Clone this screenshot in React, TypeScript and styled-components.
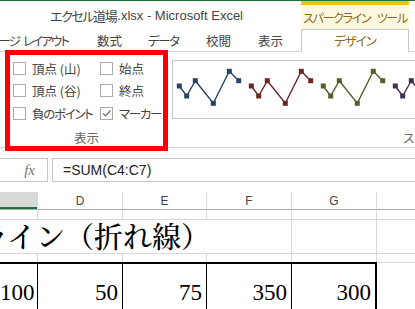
import React from "react";
import styled, { createGlobalStyle } from "styled-components";

const GlobalStyle = createGlobalStyle`
  html, body { margin: 0; padding: 0; background: #fff; }
  body { width: 415px; height: 309px; overflow: hidden; }
`;

const UI_FONT = `"Noto Sans CJK JP", "Liberation Sans", sans-serif`;
const COLS = "38px 85px 84px 85px 85px 85px";

const Window = styled.div`
  width: 415px;
  height: 309px;
  overflow: hidden;
  display: flex;
  flex-direction: column;
  background: #fff;
  border-top: 1px solid #217346;
  box-sizing: border-box;
  font-family: ${UI_FONT};
  font-feature-settings: "palt" 1;
  color: #444;
`;

const TopBar = styled.div`
  display: flex;
  height: 51px;
  flex-shrink: 0;
`;

const TopLeft = styled.div`
  flex: 1;
  display: flex;
  flex-direction: column;
  min-width: 0;
`;

const TitleRow = styled.div`
  height: 28px;
  display: flex;
  align-items: center;
  padding-left: 50px;
  font-family: "Liberation Sans", "Noto Sans CJK JP", sans-serif;
  font-size: 13px;
  color: #444;
  white-space: pre;
`;

const TitleJa = styled.span`
  letter-spacing: -1.4px;
  margin-right: 1px;
`;

const TabRow = styled.div`
  height: 23px;
  box-sizing: border-box;
  border-bottom: 1px solid #d5d5d5;
  display: flex;
`;

const Tab = styled.div<{ $w: number; $end?: boolean; $pr?: number; $ls?: number }>`
  width: ${(p) => p.$w}px;
  flex-shrink: 0;
  overflow: hidden;
  display: flex;
  justify-content: ${(p) => (p.$end ? "flex-end" : "flex-start")};
  padding-right: ${(p) => p.$pr ?? 0}px;
  box-sizing: border-box;
  padding-top: 3px;
  font-size: 12.5px;
  line-height: 17px;
  letter-spacing: ${(p) => p.$ls ?? 0}px;
  word-spacing: 3px;
  white-space: nowrap;
  color: #444;
  & > span { flex-shrink: 0; }
`;

const ToolColumn = styled.div`
  width: 108px;
  display: flex;
  flex-direction: column;
  flex-shrink: 0;
`;

const ToolHeader = styled.div`
  height: 28px;
  box-sizing: border-box;
  border-top: 4px solid #f0c400;
  background: #fff8e1;
  display: flex;
  align-items: center;
  justify-content: center;
  font-size: 12px;
  letter-spacing: -1.3px;
  word-spacing: 5px;
  color: #8b6b12;
  white-space: nowrap;
`;

const DesignTab = styled.div`
  height: 23px;
  box-sizing: border-box;
  border: 1px solid #c9c9c9;
  border-bottom: none;
  background: #fff;
  display: flex;
  justify-content: center;
  padding-top: 2px;
  font-size: 12.5px;
  line-height: 17px;
  letter-spacing: -1px;
  color: #8b6b12;
`;

const RightEdge = styled.div`
  width: 6px;
  flex-shrink: 0;
  border-bottom: 1px solid #d5d5d5;
`;

const Ribbon = styled.div`
  height: 95px;
  flex-shrink: 0;
  border-bottom: 1px solid #d5d5d5;
  display: flex;
  padding-left: 5px;
`;

const DisplayGroup = styled.div`
  position: relative;
  width: 163px;
  flex-shrink: 0;
  box-sizing: border-box;
  padding: 5px 8px 1px 8px;
  display: flex;
  flex-direction: column;
`;

const RedFrame = styled.div`
  position: absolute;
  top: -2px;
  left: 0;
  right: 0;
  bottom: -4px;
  border: 5px solid #ff0000;
  pointer-events: none;
`;

const CheckGrid = styled.div`
  display: grid;
  grid-template-columns: 87px auto;
  grid-auto-rows: 22.5px;
`;

const CheckItem = styled.label<{ $ls?: number }>`
  display: flex;
  align-items: center;
  gap: 6px;
  font-size: 12.5px;
  letter-spacing: ${(p) => p.$ls ?? 0}px;
  color: #444;
  white-space: nowrap;
`;

const Box = styled.span`
  width: 13px;
  height: 13px;
  box-sizing: border-box;
  border: 1px solid #ababab;
  background: #fff;
  display: grid;
  place-items: center;
  flex-shrink: 0;
`;

const GroupLabel = styled.div<{ $pl?: number }>`
  margin-top: auto;
  font-size: 12.5px;
  line-height: 16px;
  color: #666;
  white-space: nowrap;
  text-align: ${(p) => (p.$pl !== undefined ? "left" : "center")};
  padding-left: ${(p) => p.$pl ?? 0}px;
`;

const GalleryGroup = styled.div`
  flex: 1;
  margin-left: 4px;
  padding-top: 8px;
  padding-bottom: 1px;
  display: flex;
  flex-direction: column;
  min-width: 0;
`;

const GalleryBox = styled.div`
  height: 59px;
  box-sizing: border-box;
  border: 1px solid #c6c6c6;
  border-right: none;
  overflow: hidden;
`;

const FormulaBar = styled.div`
  display: flex;
  gap: 4px;
  height: 24px;
  margin: 10px -2px 10px -1px;
  flex-shrink: 0;
`;

const FxBox = styled.div`
  width: 49px;
  box-sizing: border-box;
  border: 1px solid #c6c6c6;
  display: flex;
  align-items: center;
  justify-content: flex-end;
  padding-right: 12px;
  font-family: "Liberation Serif", serif;
  font-style: italic;
  font-size: 15px;
  color: #777;
`;

const FormulaInput = styled.div`
  flex: 1;
  box-sizing: border-box;
  border: 1px solid #c6c6c6;
  display: flex;
  align-items: center;
  padding-left: 10px;
  font-family: "Liberation Sans", sans-serif;
  font-size: 14px;
  color: #222;
`;

const Sheet = styled.div`
  flex: 1;
  overflow: hidden;
  width: 462px;
`;

const GridRow = styled.div<{ $h: number }>`
  display: grid;
  grid-template-columns: ${COLS};
  height: ${(p) => p.$h}px;
`;

const HeaderCell = styled.div<{ $selected?: boolean }>`
  box-sizing: border-box;
  border-right: 1px solid #dadada;
  border-bottom: 1px solid #ababab;
  background: ${(p) => (p.$selected ? "#d9d9d9" : "#fff")};
  box-shadow: ${(p) => (p.$selected ? "inset 0 -2px 0 #217346" : "none")};
  display: flex;
  align-items: center;
  justify-content: center;
  font-family: "Liberation Sans", sans-serif;
  font-size: 12px;
  color: #444;
`;

const Cell = styled.div<{ $noBottom?: boolean }>`
  box-sizing: border-box;
  border-right: 1px solid #d8d8d8;
  border-bottom: ${(p) => (p.$noBottom ? "none" : "1px solid #d8d8d8")};
`;

const TitleCell = styled.div`
  grid-column: 1 / span 4;
  box-sizing: border-box;
  border-right: 1px solid #d8d8d8;
  border-bottom: 1px solid #d8d8d8;
  overflow: hidden;
  display: flex;
  justify-content: flex-end;
  align-items: flex-end;
  padding: 0 81px 1px 0;
`;

const TitleText = styled.span`
  flex-shrink: 0;
  white-space: nowrap;
  font-family: "Noto Serif CJK JP", "Noto Sans CJK JP", serif;
  font-size: 29px;
  font-weight: 500;
  line-height: 32px;
  color: #000;
  font-feature-settings: normal;
`;

const DataCell = styled.div<{ $thickRight?: boolean }>`
  box-sizing: border-box;
  border-top: 2px solid #000;
  border-right: ${(p) => (p.$thickRight ? "2px" : "1px")} solid #000;
  text-align: right;
  padding: 15px 4px 0 0;
  font-family: "Liberation Serif", serif;
  font-size: 23px;
  line-height: 28px;
  color: #000;
`;

const EmptyDataCell = styled.div`
  box-sizing: border-box;
  border-top: 1px solid #d8d8d8;
`;

const SERIES = ["#27436a", "#6e2624", "#4f6228", "#403152"];
const XS = [6.3, 13.7, 22.3, 40.3, 56.3, 65.7];
const YS = [25, 35, 19.7, 42.3, 10.3, 19.7];

const Sparklines: React.FC = () => (
  <svg width="260" height="57" viewBox="0 0 260 57">
    {SERIES.map((c, i) => {
      const pts = XS.map((x, k) => [x + i * 72, YS[k]] as const);
      return (
        <g key={c}>
          <polyline
            points={pts.map(([x, y]) => `${x},${y}`).join(" ")}
            fill="none"
            stroke={c}
            strokeWidth={1.4}
          />
          {pts.map(([x, y], k) => (
            <rect key={k} x={x - 2.5} y={y - 2.5} width={5} height={5} fill={c} />
          ))}
        </g>
      );
    })}
  </svg>
);

const Check: React.FC<{ label: string; checked?: boolean; ls?: number }> = ({
  label,
  checked,
  ls,
}) => (
  <CheckItem $ls={ls}>
    <Box>
      {checked && (
        <svg width="11" height="11" viewBox="0 0 11 11">
          <polyline points="2,5.5 4.5,8 9.5,2.5" fill="none" stroke="#707070" strokeWidth="1.2" />
        </svg>
      )}
    </Box>
    <span>{label}</span>
  </CheckItem>
);

export default function App() {
  return (
    <>
      <GlobalStyle />
      <Window>
        <TopBar>
          <TopLeft>
            <TitleRow>
              <TitleJa>エクセル道場</TitleJa>.xlsx - Microsoft Excel
            </TitleRow>
            <TabRow>
              <Tab $w={97} $end $pr={29} $ls={-1.9}>
                <span>ページ レイアウト</span>
              </Tab>
              <Tab $w={51}>数式</Tab>
              <Tab $w={58} $ls={-1.5}>データ</Tab>
              <Tab $w={52}>校閲</Tab>
              <Tab $w={43}>表示</Tab>
            </TabRow>
          </TopLeft>
          <ToolColumn>
            <ToolHeader>スパークライン ツール</ToolHeader>
            <DesignTab>デザイン</DesignTab>
          </ToolColumn>
          <RightEdge />
        </TopBar>

        <Ribbon>
          <DisplayGroup>
            <CheckGrid>
              <Check label="頂点 (山)" />
              <Check label="始点" />
              <Check label="頂点 (谷)" />
              <Check label="終点" />
              <Check label="負のポイント" ls={-1.3} />
              <Check label="マーカー" checked ls={-1.3} />
            </CheckGrid>
            <GroupLabel>表示</GroupLabel>
            <RedFrame />
          </DisplayGroup>
          <GalleryGroup>
            <GalleryBox>
              <Sparklines />
            </GalleryBox>
            <GroupLabel $pl={231}>スタイル</GroupLabel>
          </GalleryGroup>
        </Ribbon>

        <FormulaBar>
          <FxBox>fx</FxBox>
          <FormulaInput>=SUM(C4:C7)</FormulaInput>
        </FormulaBar>

        <Sheet>
          <GridRow $h={18}>
            <HeaderCell $selected />
            <HeaderCell>D</HeaderCell>
            <HeaderCell>E</HeaderCell>
            <HeaderCell>F</HeaderCell>
            <HeaderCell>G</HeaderCell>
            <HeaderCell>H</HeaderCell>
          </GridRow>
          <GridRow $h={10}>
            <Cell />
            <Cell />
            <Cell />
            <Cell />
            <Cell />
            <Cell />
          </GridRow>
          <GridRow $h={34}>
            <TitleCell>
              <TitleText>スパークライン（折れ線）</TitleText>
            </TitleCell>
            <Cell />
            <Cell />
          </GridRow>
          <GridRow $h={8}>
            <Cell $noBottom />
            <Cell $noBottom />
            <Cell $noBottom />
            <Cell $noBottom />
            <Cell $noBottom />
            <Cell $noBottom />
          </GridRow>
          <GridRow $h={60}>
            <DataCell>100</DataCell>
            <DataCell>50</DataCell>
            <DataCell>75</DataCell>
            <DataCell>350</DataCell>
            <DataCell $thickRight>300</DataCell>
            <EmptyDataCell />
          </GridRow>
        </Sheet>
      </Window>
    </>
  );
}
